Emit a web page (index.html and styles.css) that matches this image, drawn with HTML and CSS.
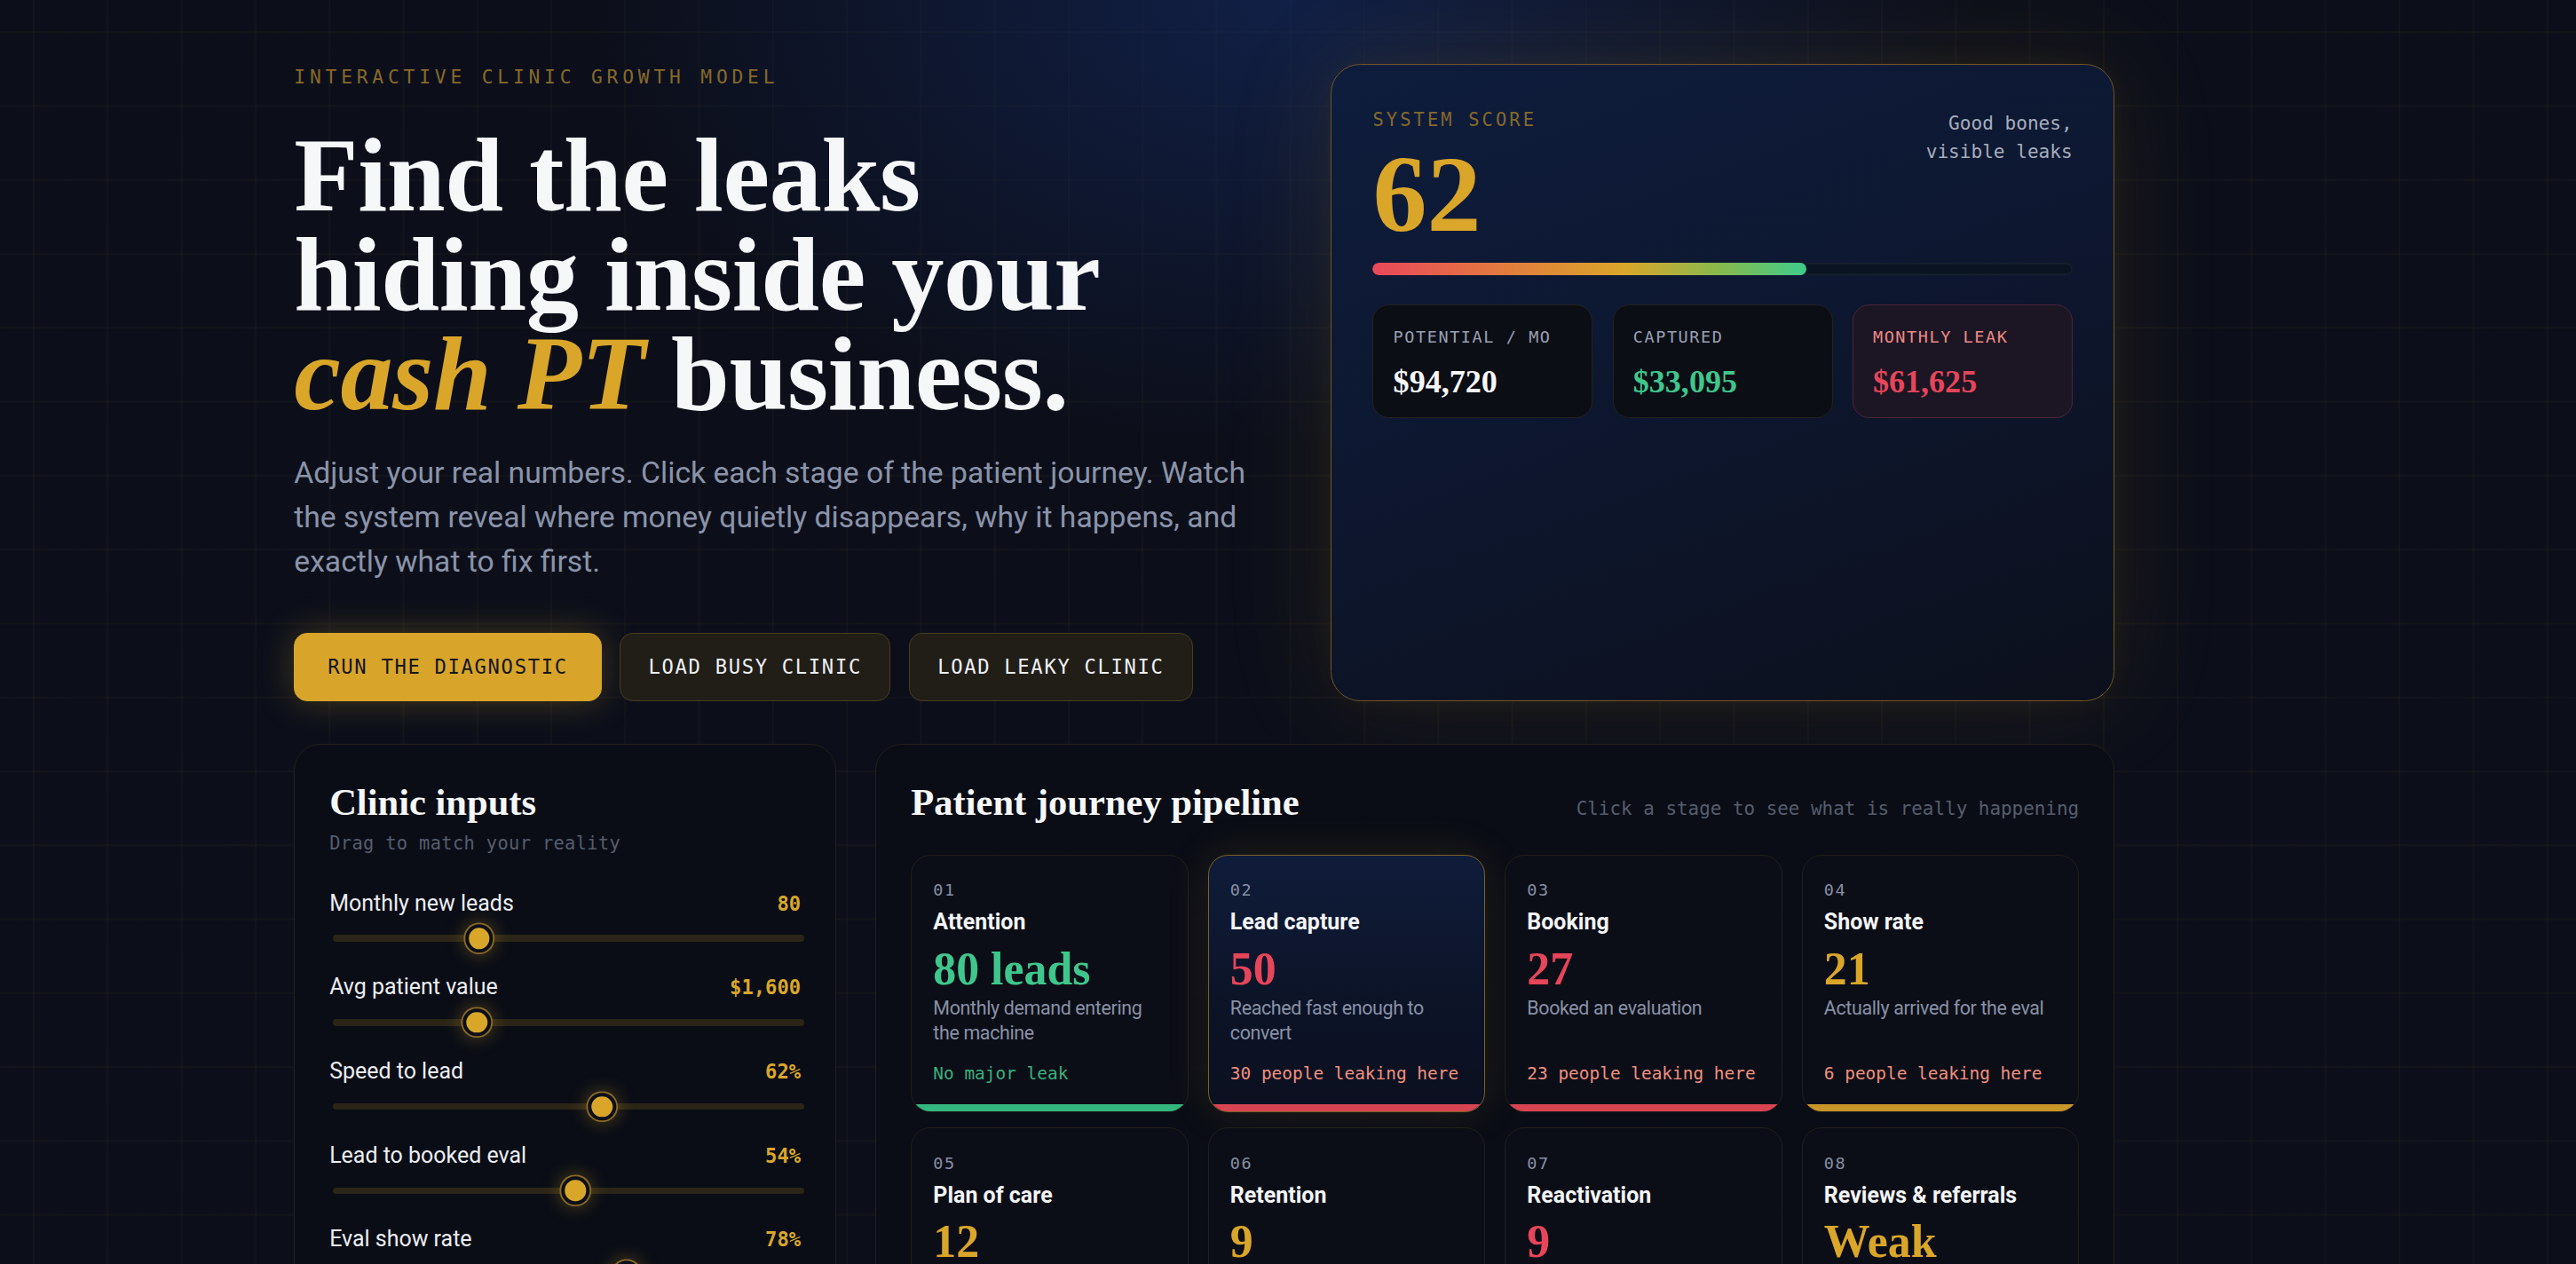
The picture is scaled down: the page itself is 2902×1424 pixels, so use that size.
FILE: index.html
```html
<!DOCTYPE html>
<html lang="en">
<head>
<meta charset="utf-8">
<title>Interactive Clinic Growth Model</title>
<link rel="stylesheet" href="styles.css">
</head>
<body>
<div class="page">
  <section class="hero">
    <div class="hero-copy">
      <div class="eyebrow">INTERACTIVE CLINIC GROWTH MODEL</div>
      <h1 class="headline">Find the leaks<br>hiding inside your<br><em>cash PT</em> business.</h1>
      <p class="lede">Adjust your real numbers. Click each stage of the patient journey. Watch the system reveal where money quietly disappears, why it happens, and exactly what to fix first.</p>
      <div class="actions">
        <button class="btn btn-primary">RUN THE DIAGNOSTIC</button>
        <button class="btn btn-ghost">LOAD BUSY CLINIC</button>
        <button class="btn btn-ghost">LOAD LEAKY CLINIC</button>
      </div>
    </div>
    <aside class="score-card">
      <div class="score-head">
        <div class="score-main">
          <div class="score-label">SYSTEM SCORE</div>
          <div class="score-value">62</div>
        </div>
        <div class="score-verdict">Good bones,<br>visible leaks</div>
      </div>
      <div class="score-bar"><div class="score-fill" style="width:62%"></div></div>
      <div class="stats">
        <div class="stat">
          <div class="stat-label">POTENTIAL / MO</div>
          <div class="stat-value">$94,720</div>
        </div>
        <div class="stat">
          <div class="stat-label">CAPTURED</div>
          <div class="stat-value green">$33,095</div>
        </div>
        <div class="stat stat-leak">
          <div class="stat-label">MONTHLY LEAK</div>
          <div class="stat-value red">$61,625</div>
        </div>
      </div>
    </aside>
  </section>

  <section class="workspace">
    <div class="panel inputs-panel">
      <h2 class="panel-title">Clinic inputs</h2>
      <div class="panel-sub">Drag to match your reality</div>
      <div class="sliders">
        <div class="slider">
          <div class="slider-head"><span class="slider-name">Monthly new leads</span><span class="slider-val">80</span></div>
          <div class="track"><span class="thumb" style="left:31.1%"></span></div>
        </div>
        <div class="slider">
          <div class="slider-head"><span class="slider-name">Avg patient value</span><span class="slider-val">$1,600</span></div>
          <div class="track"><span class="thumb" style="left:30.6%"></span></div>
        </div>
        <div class="slider">
          <div class="slider-head"><span class="slider-name">Speed to lead</span><span class="slider-val">62%</span></div>
          <div class="track"><span class="thumb" style="left:57.1%"></span></div>
        </div>
        <div class="slider">
          <div class="slider-head"><span class="slider-name">Lead to booked eval</span><span class="slider-val">54%</span></div>
          <div class="track"><span class="thumb" style="left:51.5%"></span></div>
        </div>
        <div class="slider">
          <div class="slider-head"><span class="slider-name">Eval show rate</span><span class="slider-val">78%</span></div>
          <div class="track"><span class="thumb" style="left:62.3%"></span></div>
        </div>
        <div class="slider">
          <div class="slider-head"><span class="slider-name">Plan of care acceptance</span><span class="slider-val">58%</span></div>
          <div class="track"><span class="thumb" style="left:54%"></span></div>
        </div>
        <div class="slider">
          <div class="slider-head"><span class="slider-name">Plan completion</span><span class="slider-val">72%</span></div>
          <div class="track"><span class="thumb" style="left:66%"></span></div>
        </div>
      </div>
    </div>

    <div class="panel pipeline-panel">
      <div class="pipeline-head">
        <h2 class="panel-title">Patient journey pipeline</h2>
        <div class="pipeline-hint">Click a stage to see what is really happening</div>
      </div>
      <div class="stages">
        <div class="stage">
          <div class="stage-num">01</div>
          <div class="stage-name">Attention</div>
          <div class="stage-value green">80 leads</div>
          <div class="stage-desc">Monthly demand entering the machine</div>
          <div class="stage-leak ok">No major leak</div>
          <div class="stage-bar bar-green"></div>
        </div>
        <div class="stage stage-active">
          <div class="stage-num">02</div>
          <div class="stage-name">Lead capture</div>
          <div class="stage-value red">50</div>
          <div class="stage-desc">Reached fast enough to convert</div>
          <div class="stage-leak">30 people leaking here</div>
          <div class="stage-bar bar-red"></div>
        </div>
        <div class="stage">
          <div class="stage-num">03</div>
          <div class="stage-name">Booking</div>
          <div class="stage-value red">27</div>
          <div class="stage-desc">Booked an evaluation</div>
          <div class="stage-leak">23 people leaking here</div>
          <div class="stage-bar bar-red"></div>
        </div>
        <div class="stage">
          <div class="stage-num">04</div>
          <div class="stage-name">Show rate</div>
          <div class="stage-value gold">21</div>
          <div class="stage-desc">Actually arrived for the eval</div>
          <div class="stage-leak">6 people leaking here</div>
          <div class="stage-bar bar-gold"></div>
        </div>
        <div class="stage">
          <div class="stage-num">05</div>
          <div class="stage-name">Plan of care</div>
          <div class="stage-value gold">12</div>
          <div class="stage-desc">Accepted a full plan of care</div>
          <div class="stage-leak">9 people leaking here</div>
          <div class="stage-bar bar-gold"></div>
        </div>
        <div class="stage">
          <div class="stage-num">06</div>
          <div class="stage-name">Retention</div>
          <div class="stage-value gold">9</div>
          <div class="stage-desc">Completed the plan they started</div>
          <div class="stage-leak">3 people leaking here</div>
          <div class="stage-bar bar-gold"></div>
        </div>
        <div class="stage">
          <div class="stage-num">07</div>
          <div class="stage-name">Reactivation</div>
          <div class="stage-value red">9</div>
          <div class="stage-desc">Past patients brought back</div>
          <div class="stage-leak">Dormant list untouched</div>
          <div class="stage-bar bar-red"></div>
        </div>
        <div class="stage">
          <div class="stage-num">08</div>
          <div class="stage-name">Reviews &amp; referrals</div>
          <div class="stage-value gold">Weak</div>
          <div class="stage-desc">Word of mouth engine</div>
          <div class="stage-leak">Referrals left on the table</div>
          <div class="stage-bar bar-gold"></div>
        </div>
      </div>
    </div>
  </section>
</div>
</body>
</html>
```

FILE: styles.css
```css
html {
  zoom: 1.8508;
  background: #0c0f1a;
}

body {
  margin: 0;
  min-height: 800px;
  color: #f5f6f8;
  font-family: Roboto, "Noto Sans", sans-serif;
  background-color: #0c0f1a;
  background-image:
    radial-gradient(ellipse 560px 360px at 50% 0%, rgba(20, 45, 105, 0.55), rgba(20, 45, 105, 0) 75%),
    linear-gradient(rgba(217, 166, 42, 0.035) 1px, transparent 1px),
    linear-gradient(90deg, rgba(217, 166, 42, 0.035) 1px, transparent 1px);
  background-size: 100% 100%, 45px 45px, 45px 45px;
  background-position: 0 0, 20px 19px, 20px 19px;
  background-repeat: no-repeat, repeat, repeat;
}

.page {
  width: 1108px;
  margin-left: 179px;
  padding-top: 39px;
}

/* ---------- hero ---------- */
.hero {
  display: grid;
  grid-template-columns: 1fr 477px;
  column-gap: 30px;
}

.hero-copy {
  padding-top: 1px;
}

.eyebrow {
  font-family: "DejaVu Sans Mono", monospace;
  font-size: 11.5px;
  line-height: 14px;
  letter-spacing: 2.6px;
  color: #86692b;
}

.headline {
  margin: 23px 0 0;
  font-family: "Liberation Serif", serif;
  font-weight: 700;
  font-size: 64px;
  line-height: 60.5px;
  letter-spacing: -0.2px;
  color: #f6f7f9;
}

.headline em {
  font-style: italic;
  color: #d9a62a;
}

.lede {
  margin: 16px 0 0;
  font-size: 18.2px;
  line-height: 27px;
  color: #8b93a9;
}

.actions {
  display: flex;
  gap: 11px;
  margin-top: 29.5px;
}

.btn {
  height: 42px;
  padding: 0 17px;
  border-radius: 8px;
  font-family: "DejaVu Sans Mono", monospace;
  font-size: 12px;
  letter-spacing: 0.9px;
  cursor: pointer;
}

.btn-primary {
  padding: 0 20px;
  background: #d8a52a;
  color: #14161d;
  border: 1px solid #d8a52a;
  box-shadow: 0 0 22px rgba(217, 166, 42, 0.28);
}

.btn-ghost {
  background: #211e18;
  color: #eef0f4;
  border: 1px solid #4a3d1f;
}

/* ---------- score card ---------- */
.score-card {
  border: 1px solid #6e5725;
  border-radius: 18px;
  padding: 27px 25px 26px;
  background: linear-gradient(160deg, #0e1d3d 0%, #0d1730 45%, #0c101c 100%);
  box-shadow: 0 0 70px rgba(217, 166, 42, 0.11), 0 0 18px rgba(217, 166, 42, 0.06);
}

.score-head {
  display: flex;
  justify-content: space-between;
  align-items: flex-start;
}

.score-label {
  font-family: "DejaVu Sans Mono", monospace;
  font-size: 11px;
  line-height: 14px;
  letter-spacing: 1.7px;
  color: #86692b;
}

.score-value {
  margin-top: 5.7px;
  font-family: "Liberation Serif", serif;
  font-weight: 700;
  font-size: 66px;
  line-height: 64px;
  color: #d9a62a;
}

.score-verdict {
  font-family: "DejaVu Sans Mono", monospace;
  font-size: 11.4px;
  line-height: 17px;
  text-align: right;
  color: #a6adbd;
}

.score-bar {
  margin-top: 9.5px;
  height: 8px;
  border-radius: 8px;
  background: #0a1322;
  box-shadow: inset 0 0 0 1px rgba(255, 255, 255, 0.05);
  overflow: hidden;
}

.score-fill {
  height: 100%;
  border-radius: 8px;
  background: linear-gradient(90deg, #e9475c 0%, #e27a3e 30%, #d9a62a 58%, #88b94d 80%, #3ecb8b 100%);
}

.stats {
  display: grid;
  grid-template-columns: repeat(3, 1fr);
  gap: 12px;
  margin-top: 17.7px;
}

.stat {
  padding: 13px 12px 10px;
  border-radius: 10px;
  background: #0c0e16;
  border: 1px solid #24221e;
}

.stat-label {
  font-family: "DejaVu Sans Mono", monospace;
  font-size: 10px;
  line-height: 13px;
  letter-spacing: 0.85px;
  color: #98a0b2;
}

.stat-value {
  margin-top: 9px;
  font-family: "Liberation Serif", serif;
  font-weight: 700;
  font-size: 19.5px;
  line-height: 23px;
  color: #f6f7f9;
}

.stat-leak {
  background: #1c1624;
  border-color: #4b2536;
}

.stat-leak .stat-label {
  color: #ee8a86;
}

.green { color: #3fc68c; }
.red { color: #e6455a; }
.gold { color: #d9a62a; }

/* ---------- workspace ---------- */
.workspace {
  display: grid;
  grid-template-columns: 330px 1fr;
  gap: 24px;
  margin-top: 26px;
}

.panel {
  border: 1px solid #221f1a;
  border-radius: 16px;
  background: rgba(11, 13, 22, 0.92);
  padding: 21px 21px 24px;
}

.inputs-panel {
  padding-right: 19px;
}

.panel-title {
  margin: 0;
  font-family: "Liberation Serif", serif;
  font-weight: 700;
  font-size: 23px;
  line-height: 27.6px;
  color: #f6f7f9;
}

.panel-sub {
  margin-top: 4.5px;
  font-family: "DejaVu Sans Mono", monospace;
  font-size: 11px;
  line-height: 14px;
  letter-spacing: 0.2px;
  color: #565d6d;
}

.sliders {
  display: flex;
  flex-direction: column;
  gap: 18.6px;
  margin-top: 20px;
}

.slider {
  display: flex;
  flex-direction: column;
  gap: 10.6px;
}

.slider-head {
  display: flex;
  justify-content: space-between;
  align-items: baseline;
}

.slider-name {
  font-size: 13.5px;
  line-height: 18px;
  color: #eceef3;
}

.slider-val {
  padding-right: 2px;
  font-family: "DejaVu Sans Mono", monospace;
  font-size: 12px;
  font-weight: 700;
  color: #d9a62a;
}

.track {
  position: relative;
  height: 4px;
  margin-left: 2px;
  border-radius: 4px;
  background: #2b2517;
}

.thumb {
  position: absolute;
  top: 50%;
  width: 17px;
  height: 17px;
  box-sizing: border-box;
  border-radius: 50%;
  background: #d9a62a;
  border: 2.5px solid #0c0f19;
  box-shadow: 0 0 0 1px #8a6a25, 0 0 12px rgba(217, 166, 42, 0.45);
  transform: translate(-50%, -50%);
}

/* ---------- pipeline ---------- */
.pipeline-head {
  display: flex;
  justify-content: space-between;
  align-items: baseline;
}

.pipeline-hint {
  font-family: "DejaVu Sans Mono", monospace;
  font-size: 11.3px;
  color: #565d6d;
}

.stages {
  display: grid;
  grid-template-columns: repeat(4, 1fr);
  column-gap: 12px;
  row-gap: 9.5px;
  margin-top: 18px;
}

.stage {
  display: flex;
  flex-direction: column;
  overflow: hidden;
  border: 1px solid #221f1a;
  border-radius: 12px;
  background: #0c0e17;
  padding: 15px 12px 0 13px;
  cursor: pointer;
}

.stage-active {
  border-color: #7a6228;
  background: linear-gradient(180deg, #0f1c3a 0%, #0c1326 60%, #0c1020 100%);
  box-shadow: 0 0 26px rgba(217, 166, 42, 0.13);
}

.stage-num {
  font-family: "DejaVu Sans Mono", monospace;
  font-size: 10px;
  line-height: 13px;
  letter-spacing: 0.8px;
  color: #8790a5;
}

.stage-name {
  margin-top: 4px;
  font-size: 13.5px;
  line-height: 17px;
  font-weight: 700;
  color: #f3f4f6;
}

.stage-value {
  margin-top: 4.5px;
  font-family: "Liberation Serif", serif;
  font-weight: 700;
  font-size: 28px;
  line-height: 30.8px;
}

.stage-desc {
  margin-top: 1.5px;
  font-size: 11.6px;
  line-height: 15px;
  letter-spacing: -0.2px;
  color: #8891a6;
}

.stage-leak {
  margin-top: auto;
  padding-top: 11px;
  font-family: "DejaVu Sans Mono", monospace;
  font-size: 10.5px;
  line-height: 13px;
  color: #f0907f;
}

.stage-leak.ok {
  color: #3ab07c;
}

.stage-bar {
  height: 4px;
  margin: 12px -12px 0 -13px;
}

.bar-green { background: #34b77f; }
.bar-red { background: #d94452; }
.bar-gold { background: #c9962a; }
```
